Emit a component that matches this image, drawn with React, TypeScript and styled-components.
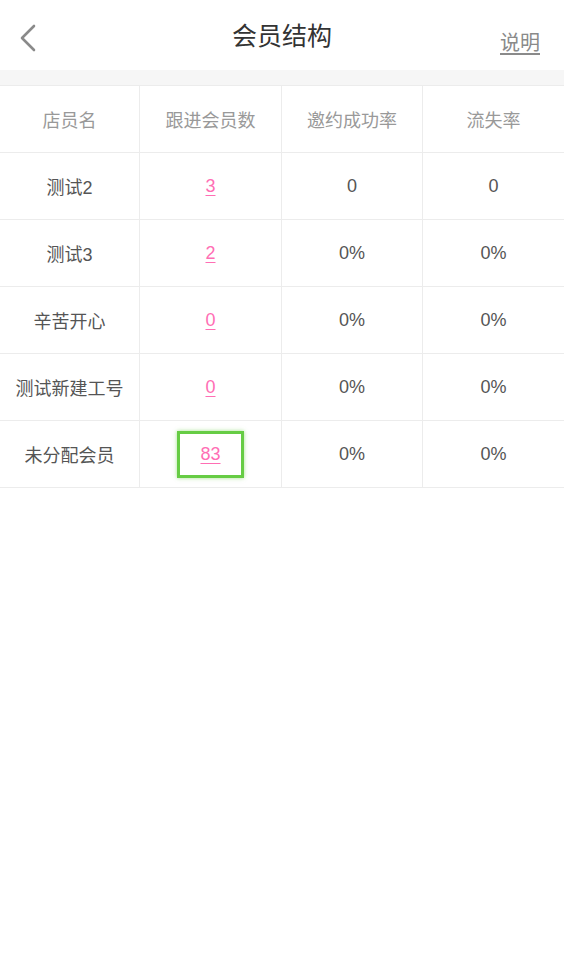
import React from "react";
import styled, { createGlobalStyle } from "styled-components";

const GlobalStyle = createGlobalStyle`
  html, body {
    margin: 0;
    padding: 0;
    background: #fff;
    font-family: "Liberation Sans", "Noto Sans CJK SC", sans-serif;
  }
`;

type Row = { name: string; follow: string; invite: string; loss: string; marked?: boolean };

const rows: Row[] = [
  { name: "测试2", follow: "3", invite: "0", loss: "0" },
  { name: "测试3", follow: "2", invite: "0%", loss: "0%" },
  { name: "辛苦开心", follow: "0", invite: "0%", loss: "0%" },
  { name: "测试新建工号", follow: "0", invite: "0%", loss: "0%" },
  { name: "未分配会员", follow: "83", invite: "0%", loss: "0%", marked: true },
];

export default function App() {
  return (
    <>
      <GlobalStyle />
      <Page>
        <NavBar>
          <BackButton aria-label="back">
            <svg width="20" height="28" viewBox="0 0 20 28">
              <path d="M16 2 L4 14 L16 26" fill="none" stroke="#8a8a8a" strokeWidth="2.6" strokeLinecap="round" strokeLinejoin="round" />
            </svg>
          </BackButton>
          <Title>会员结构</Title>
          <HelpLink>说明</HelpLink>
        </NavBar>
        <Gap />
        <Table>
          <HeadRow>
            <HeadCell>店员名</HeadCell>
            <HeadCell>跟进会员数</HeadCell>
            <HeadCell>邀约成功率</HeadCell>
            <HeadCell>流失率</HeadCell>
          </HeadRow>
          {rows.map((r) => (
            <BodyRow key={r.name}>
              <Cell>{r.name}</Cell>
              <Cell>
                <CountLink $marked={r.marked}>{r.follow}</CountLink>
              </Cell>
              <Cell>{r.invite}</Cell>
              <Cell>{r.loss}</Cell>
            </BodyRow>
          ))}
        </Table>
      </Page>
    </>
  );
}

const Page = styled.div`
  width: 564px;
  min-height: 980px;
  background: #fff;
`;

const NavBar = styled.div`
  height: 70px;
  display: flex;
  align-items: center;
  justify-content: space-between;
  padding: 0 24px 0 18px;
  position: relative;
`;

const BackButton = styled.div`
  width: 40px;
  height: 40px;
  display: flex;
  align-items: center;
  margin-top: 6px;
`;

const Title = styled.div`
  position: absolute;
  left: 0;
  right: 0;
  top: 0;
  height: 70px;
  line-height: 72px;
  text-align: center;
  font-size: 25px;
  color: #333;
  pointer-events: none;
`;

const HelpLink = styled.span`
  font-size: 20px;
  color: #8a8a8a;
  text-decoration: underline;
  text-underline-offset: 3px;
  margin-top: 12px;
`;

const Gap = styled.div`
  height: 15px;
  background: #f6f6f6;
`;

const Table = styled.div`
  border-top: 1px solid #ececec;
`;

const RowBase = styled.div`
  box-sizing: border-box;
  display: grid;
  grid-template-columns: 140px 142px 141px 141px;
  height: 67px;
  border-bottom: 1px solid #ececec;
`;

const HeadRow = styled(RowBase)``;
const BodyRow = styled(RowBase)``;

const CellBase = styled.div`
  display: flex;
  align-items: center;
  justify-content: center;
  font-size: 18px;
  border-right: 1px solid #ececec;
  &:last-child {
    border-right: none;
  }
`;

const HeadCell = styled(CellBase)`
  color: #999;
`;

const Cell = styled(CellBase)`
  color: #555;
`;

const CountLink = styled.span<{ $marked?: boolean }>`
  color: #ff6eb4;
  text-decoration: underline;
  text-underline-offset: 3px;
  ${(p) =>
    p.$marked &&
    `
    display: flex;
    align-items: center;
    justify-content: center;
    width: 61px;
    height: 41px;
    border: 3px solid #66cc44;
    box-shadow: 0 0 4px rgba(102, 204, 68, 0.6);
  `}
`;
